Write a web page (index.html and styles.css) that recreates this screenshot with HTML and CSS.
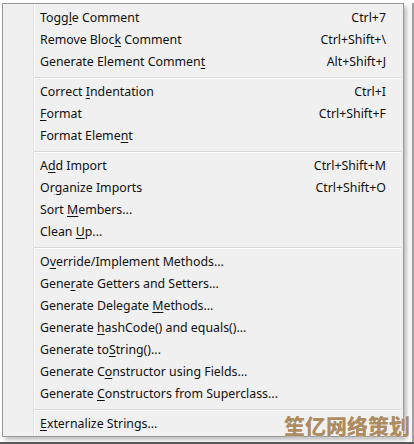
FILE: index.html
```html
<!DOCTYPE html>
<html>
<head>
<meta charset="utf-8">
<link rel="stylesheet" href="styles.css">
</head>
<body>
<div class="screen">
  <div class="menu">
    <div class="item"><span class="label">Togg<u>l</u>e Comment</span><span class="key">Ctrl+7</span></div>
    <div class="item"><span class="label">Remove Bloc<u>k</u> Comment</span><span class="key">Ctrl+Shift+\</span></div>
    <div class="item"><span class="label">Generate Element Commen<u>t</u></span><span class="key">Alt+Shift+J</span></div>
    <div class="sep"></div>
    <div class="item"><span class="label">Correct <u>I</u>ndentation</span><span class="key">Ctrl+I</span></div>
    <div class="item"><span class="label"><u>F</u>ormat</span><span class="key">Ctrl+Shift+F</span></div>
    <div class="item"><span class="label">Format Eleme<u>n</u>t</span></div>
    <div class="sep"></div>
    <div class="item"><span class="label">A<u>d</u>d Import</span><span class="key">Ctrl+Shift+M</span></div>
    <div class="item"><span class="label">Or<u>g</u>anize Imports</span><span class="key">Ctrl+Shift+O</span></div>
    <div class="item"><span class="label">Sort <u>M</u>embers...</span></div>
    <div class="item"><span class="label">Clean <u>U</u>p...</span></div>
    <div class="sep"></div>
    <div class="item"><span class="label">O<u>v</u>erride/Implement Methods...</span></div>
    <div class="item"><span class="label">Gene<u>r</u>ate Getters and Setters...</span></div>
    <div class="item"><span class="label">Generate Delegate <u>M</u>ethods...</span></div>
    <div class="item"><span class="label">Generate <u>h</u>ashCode() and equals()...</span></div>
    <div class="item"><span class="label">Generate to<u>S</u>tring()...</span></div>
    <div class="item"><span class="label">Generate C<u>o</u>nstructor using Fields...</span></div>
    <div class="item"><span class="label">Generate <u>C</u>onstructors from Superclass...</span></div>
    <div class="sep"></div>
    <div class="item"><span class="label"><u>E</u>xternalize Strings...</span></div>
  </div>
  <div class="side"></div>
  <div class="watermark">笙亿网络策划</div>
</div>
</body>
</html>
```
FILE: styles.css
```css
html, body {
  margin: 0;
  padding: 0;
}
body {
  background: #ffffff;
  width: 414px;
  height: 444px;
  overflow: hidden;
  font-family: "Noto Sans", "Open Sans", sans-serif;
}
.screen {
  position: relative;
  display: flex;
  align-items: flex-start;
  padding: 3px 0 0 2px;
  height: 444px;
  box-sizing: border-box;
  border-bottom: 2px solid #5a5a5a;
}
.menu {
  position: relative;
  width: 400px;
  background: #f0f0f0;
  border: 1px solid #979797;
  padding: 2px 0;
  box-shadow: 3px 3px 4px rgba(0, 0, 0, 0.25);
  background-image: linear-gradient(to right, transparent 30px, #e2e3e3 30px, #e2e3e3 31px, #ffffff 31px, #ffffff 32px, transparent 32px);
}
.item {
  display: flex;
  justify-content: space-between;
  align-items: center;
  height: 22px;
  padding: 0 17px 0 37px;
  font-size: 12.35px;
  color: #111;
  white-space: nowrap;
}
.item u {
  text-decoration-thickness: 1px;
  text-underline-offset: 2px;
}
.sep {
  height: 8px;
  margin: 0 2px 0 31px;
  box-sizing: border-box;
  padding-top: 5px;
}
.sep::before {
  content: "";
  display: block;
  height: 1px;
  background: #d7d7d7;
  border-bottom: 1px solid #ffffff;
}
.side {
  flex: 1;
  align-self: stretch;
  margin-left: 6px;
  border-right: 2px solid #a0a0a0;
  background: #f6f6f6;
}
.watermark {
  position: absolute;
  right: 4px;
  bottom: 6px;
  font-family: "Noto Sans CJK SC", sans-serif;
  font-weight: 900;
  font-size: 21px;
  color: #ad8c62;
  text-shadow: 0 0 2px #ffffff;
  line-height: 1;
}
```
